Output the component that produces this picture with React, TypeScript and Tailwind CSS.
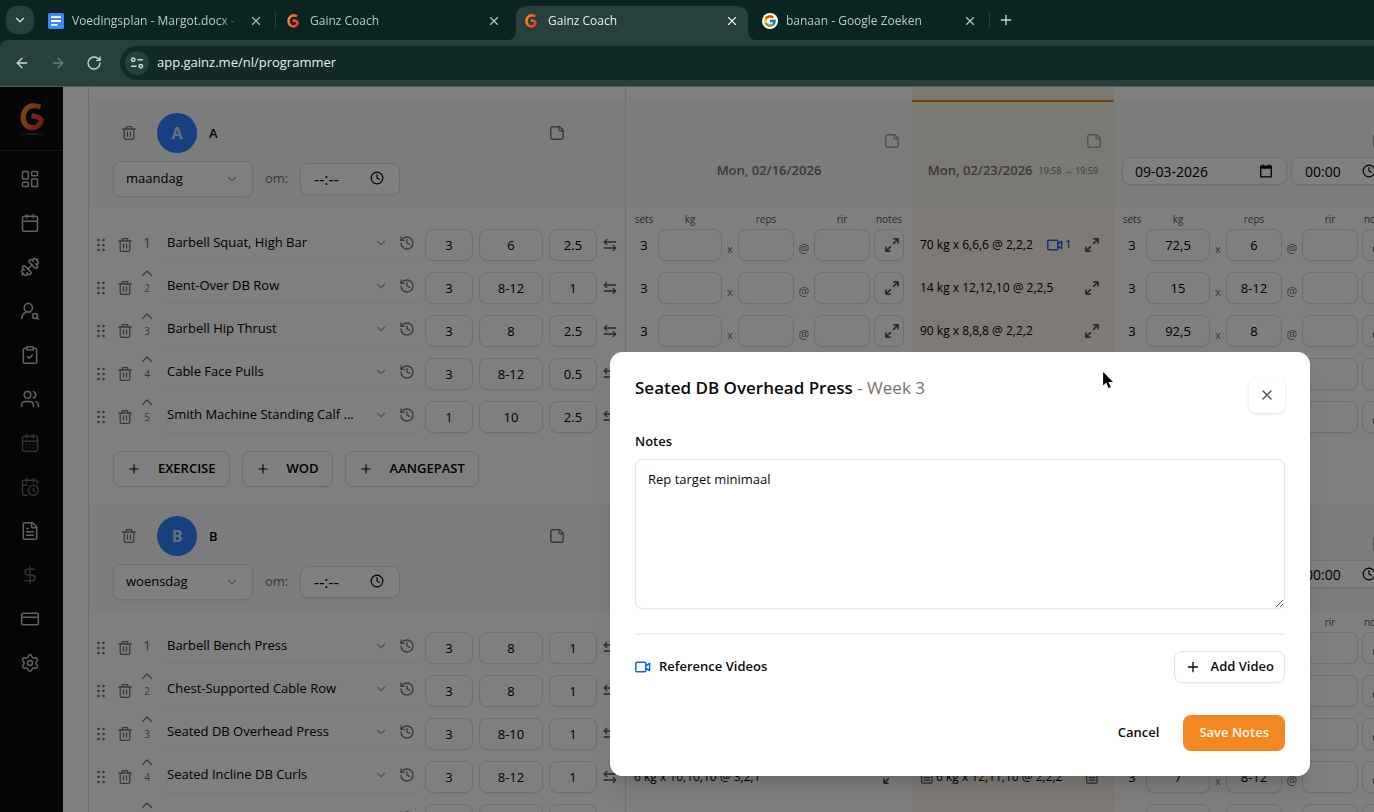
import React, { useState } from 'react';
import {
    ArrowLeft, ArrowRight, Calendar, CalendarClock, CalendarDays, ChevronDown, ClipboardCheck, Clock,
    CreditCard, DollarSign, Dumbbell, FileText, History, LayoutDashboard, Plus, RotateCw, Settings,
    UserRoundSearch, Users, X,
} from 'lucide-react';
import { FcGoogle } from 'react-icons/fc';

type Logged = { text: string; video?: number; note?: boolean };
type Planned = { sets: string; kg: string; reps: string; note?: boolean };
type Exercise = {
    name: string;
    sets: string;
    reps: string;
    step: string;
    week1: Logged | Planned | null;
    week2: Logged | null;
    week3: Planned;
};
type Day = {
    letter: string;
    weekday: string;
    date1: string;
    date2: string;
    logged: string;
    date3: string;
    exercises: Exercise[];
};

const open: Planned = { sets: '3', kg: '', reps: '' };
const blank: Planned = { sets: '', kg: '', reps: '' };

const days: Day[] = [
    {
        letter: 'A', weekday: 'maandag', date1: 'Mon, 02/16/2026', date2: 'Mon, 02/23/2026', logged: '19:58 → 19:59', date3: '09-03-2026',
        exercises: [
            { name: 'Barbell Squat, High Bar', sets: '3', reps: '6', step: '2.5', week1: open, week2: { text: '70 kg x 6,6,6 @ 2,2,2', video: 1 }, week3: { sets: '3', kg: '72,5', reps: '6' } },
            { name: 'Bent-Over DB Row', sets: '3', reps: '8-12', step: '1', week1: open, week2: { text: '14 kg x 12,12,10 @ 2,2,5' }, week3: { sets: '3', kg: '15', reps: '8-12', note: true } },
            { name: 'Barbell Hip Thrust', sets: '3', reps: '8', step: '2.5', week1: open, week2: { text: '90 kg x 8,8,8 @ 2,2,2' }, week3: { sets: '3', kg: '92,5', reps: '8' } },
            { name: 'Cable Face Pulls', sets: '3', reps: '8-12', step: '0.5', week1: null, week2: null, week3: { ...blank, note: true } },
            { name: 'Smith Machine Standing Calf ...', sets: '1', reps: '10', step: '2.5', week1: null, week2: null, week3: blank },
        ],
    },
    {
        letter: 'B', weekday: 'woensdag', date1: '', date2: '', logged: '', date3: '',
        exercises: [
            { name: 'Barbell Bench Press', sets: '3', reps: '8', step: '1', week1: null, week2: null, week3: blank },
            { name: 'Chest-Supported Cable Row', sets: '3', reps: '8', step: '1', week1: null, week2: null, week3: blank },
            { name: 'Seated DB Overhead Press', sets: '3', reps: '8-10', step: '1', week1: null, week2: null, week3: blank },
            { name: 'Seated Incline DB Curls', sets: '3', reps: '8-12', step: '1', week1: { text: '6 kg x 10,10,10 @ 3,2,1' }, week2: { text: '6 kg x 12,11,10 @ 2,2,2', note: true }, week3: { sets: '3', kg: '7', reps: '8-12' } },
            { name: '', sets: '', reps: '', step: '', week1: null, week2: null, week3: blank },
        ],
    },
];

const navItems = [
    { label: 'Dashboard', icon: LayoutDashboard },
    { label: 'Calendar', icon: Calendar },
    { label: 'Exercises', icon: Dumbbell },
    { label: 'Leads', icon: UserRoundSearch },
    { label: 'Check-ins', icon: ClipboardCheck },
    { label: 'Clients', icon: Users },
    { label: 'Schedule', icon: CalendarDays, dim: true },
    { label: 'Bookings', icon: CalendarClock, dim: true },
    { label: 'Documents', icon: FileText },
    { label: 'Finance', icon: DollarSign, dim: true },
    { label: 'Payments', icon: CreditCard },
    { label: 'Settings', icon: Settings },
];

const TrashIcon = () => (
    <svg viewBox="0 0 14 14" className="size-3.5" fill="none" stroke="currentColor" strokeWidth="1.3" strokeLinecap="round" strokeLinejoin="round">
        <path d="M.8 3h12.4M4.2 3V1.4c0-.5.3-.8.8-.8h4c.5 0 .8.3.8.8V3M2.2 3v9c0 .8.6 1.4 1.4 1.4h6.8c.8 0 1.4-.6 1.4-1.4V3M5.5 6v4.2M8.5 6v4.2" />
    </svg>
);

const NoteIcon = () => (
    <svg viewBox="0 0 14 14" className="size-3.5" fill="none" stroke="currentColor" strokeWidth="1.4" strokeLinejoin="round">
        <path d="M2.2.8h7.500l3.500 3.500v7.500c0 .8-.6 1.400-1.400 1.400H2.200c-.8 0-1.400-.6-1.400-1.400V2.200c0-.8.6-1.400 1.400-1.400zM9 .8v2.700c0 .7.5 1.200 1.200 1.200h3" />
    </svg>
);

const FileLinesIcon = () => (
    <svg viewBox="0 0 14 14" className="size-3.5" fill="none" stroke="currentColor" strokeWidth="1.2" strokeLinecap="round" strokeLinejoin="round">
        <path d="M3 .8h5.800l3.200 3v8c0 .8-.6 1.400-1.400 1.400H3c-.8 0-1.400-.6-1.400-1.400V2.200C1.600 1.400 2.200.8 3 .8zM4.200 5.200h5.400M4.200 7.700h5.400M4.200 10.200h5.400" />
    </svg>
);

const ExpandIcon = () => (
    <svg viewBox="0 0 14 14" className="size-3.5" fill="none" stroke="currentColor" strokeWidth="1.6" strokeLinecap="round" strokeLinejoin="round">
        <path d="M9 .9h4.100V5M13 1 8.600 5.400M5 13.100H.9V9M1 13l4.400-4.400" />
    </svg>
);

const SwapIcon = () => (
    <svg viewBox="0 0 14 14" className="size-3.5" fill="none" stroke="currentColor" strokeWidth="1.3" strokeLinecap="round" strokeLinejoin="round">
        <path d="M12.500 4H1.200M3.800 1.400 1.200 4l2.600 2.600M1.200 10h11.600M10.200 7.400l2.600 2.600-2.600 2.600" />
    </svg>
);

const UpIcon = () => (
    <svg viewBox="0 0 14 10" className="h-2.5 w-3.5" fill="none" stroke="currentColor" strokeWidth="1.300" strokeLinecap="round" strokeLinejoin="round">
        <path d="M2.500 7.500 7 3l4.500 4.500" />
    </svg>
);

const VideoIcon = () => (
    <svg viewBox="0 0 16 12" className="h-3 w-4" fill="none" stroke="currentColor" strokeWidth="1.5" strokeLinejoin="round">
        <path d="M1.800 1.200h8c.6 0 1 .4 1 1v7.600c0 .6-.4 1-1 1h-8c-.6 0-1-.4-1-1V2.200c0-.6.4-1 1-1zM11 4.800l3.600-2.400v7.200L11 7.200" />
    </svg>
);

const DateIcon = () => (
    <svg viewBox="0 0 14 14" className="pointer-events-none absolute right-3.5 top-[7px] size-3.5" fill="none" stroke="currentColor" strokeWidth="1.300">
        <path d="M1.700 2.200h10.600v10.600H1.700zM4 .5v2M10 .5v2" />
        <path d="M1.700 3.500h10.600" strokeWidth="2.400" />
    </svg>
);

const GripIcon = () => (
    <svg viewBox="0 0 8 14" className="h-3.5 w-2" fill="currentColor">
        {[2, 7, 12].map((y) => (
            <React.Fragment key={y}>
                <circle cx="1.500" cy={y} r="1.300" />
                <circle cx="6.500" cy={y} r="1.300" />
            </React.Fragment>
        ))}
    </svg>
);

const GainzLogo = ({ className }: { className: string }) => (
    <svg viewBox="0 0 24 28" className={className} fill="none">
        <defs>
            <linearGradient id="gainz" gradientUnits="userSpaceOnUse" x1="0" x2="24" y1="6" y2="14">
                <stop offset="0" stopColor="#fb951f" />
                <stop offset="1" stopColor="#dd3a2a" />
            </linearGradient>
        </defs>
        <path
            d="M20.500 4.200C15 2 9 2.300 5.800 6.500 2 11.500 2.400 18 6 22c3.200 3.500 9 3.300 12 .8 2.300-1.900 3.600-4.300 3-6.200-.9-2.300-4.500-3.200-9.500-3.900"
            stroke="url(#gainz)"
            strokeWidth="5.200"
        />
    </svg>
);

const fieldClass = 'rounded-lg border border-[#dedede] bg-white text-center text-[13px] text-black shadow-xs outline-none';

const DocsIcon = () => (
    <svg viewBox="0 0 16 16" className="size-4">
        <rect width="16" height="16" rx="1.500" fill="#4285f4" />
        <path d="M3 4.200h10M3 8h10M3 11.800h6.500" stroke="#fff" strokeWidth="1.800" />
    </svg>
);

const GoogleIcon = () => (
    <span className="flex size-4 items-center justify-center rounded-full bg-white">
        <FcGoogle className="size-3.5" />
    </span>
);

const BrowserTab = ({ title, icon, active, divider }: { title: string; icon: React.ReactNode; active?: boolean; divider?: boolean }) => (
    <>
        <div className={active
            ? 'relative flex h-[34px] w-[232px] shrink-0 items-center rounded-t-[10px] bg-[#28403b] pb-1 pl-2 pr-2 text-[#e3efeb]'
            : 'relative flex h-[34px] w-[232px] shrink-0 items-center pb-1 pl-2 pr-2 text-[#b3cdc6]'}
        >
            {active && (
                <>
                    <span className="absolute -left-2 bottom-0 size-2 bg-[#28403b]"><span className="block size-2 rounded-br-lg bg-[#0a2421]" /></span>
                    <span className="absolute -right-2 bottom-0 size-2 bg-[#28403b]"><span className="block size-2 rounded-bl-lg bg-[#0a2421]" /></span>
                </>
            )}
            <span className="flex w-4 shrink-0">{icon}</span>
            <span className="ml-2 flex-1 overflow-hidden whitespace-nowrap text-xs [mask-image:linear-gradient(to_right,black_88%,transparent)]">{title}</span>
            <button type="button" aria-label="Close tab" className="ml-2 flex size-4 items-center justify-center">
                <X className="size-3.5" />
            </button>
        </div>
        <span className="flex h-7 w-1.5 shrink-0 items-center justify-center">
            {divider && <span className="h-4 w-px bg-[#28403b]" />}
        </span>
    </>
);

const Browser = () => (
    <header className="shrink-0 bg-[#0a2421] text-[#c6dad5]">
        <div className="flex h-10 pt-1.5">
            <button type="button" aria-label="Search tabs" className="ml-1.5 mr-1.5 flex size-7 shrink-0 items-center justify-center rounded-[10px] bg-[#28403b]">
                <ChevronDown className="size-3.5" strokeWidth={2.5} />
            </button>
            <BrowserTab title="Voedingsplan - Margot.docx - G" icon={<DocsIcon />} divider />
            <BrowserTab title="Gainz Coach" icon={<GainzLogo className="ml-px h-3.5 w-3" />} />
            <BrowserTab title="Gainz Coach" icon={<GainzLogo className="ml-px h-3.5 w-3" />} active />
            <BrowserTab title="banaan - Google Zoeken" icon={<GoogleIcon />} divider />
            <button type="button" aria-label="New tab" className="ml-1.5 flex h-7 w-4 items-center justify-center">
                <Plus className="size-4" />
            </button>
        </div>
        <div className="flex h-[47px] items-center rounded-tl-lg border-b border-[#4d5f5b] bg-[#28403b] pl-3.5">
            <button type="button" aria-label="Back"><ArrowLeft className="size-4" /></button>
            <button type="button" aria-label="Forward" className="ml-5 text-[#6d837d]"><ArrowRight className="size-4" /></button>
            <button type="button" aria-label="Reload" className="ml-5"><RotateCw className="size-4" /></button>
            <div className="ml-[18px] flex h-[34px] flex-1 items-center rounded-l-full bg-[#112a27] pl-[5px]">
                <span className="flex size-6 shrink-0 items-center justify-center rounded-full bg-[#28403b]">
                    <svg viewBox="0 0 14 12" className="h-3 w-3.5" fill="none" stroke="currentColor" strokeWidth="1.500">
                        <circle cx="3.200" cy="2.800" r="1.700" />
                        <path d="M7.500 2.800H13M1 9.200h5.500" />
                        <circle cx="10.800" cy="9.200" r="1.700" />
                    </svg>
                </span>
                <input aria-label="Address" defaultValue="app.gainz.me/nl/programmer" className="ml-2 w-full bg-transparent text-[13px] text-[#e3efeb] outline-none" />
            </div>
        </div>
    </header>
);

const Sidebar = () => (
    <nav className="w-[63px] shrink-0 bg-[#0a0a0a]">
        <div className="flex h-16 flex-col items-center border-b border-[#2a2a2a] pt-4">
            <GainzLogo className="h-7 w-6" />
            <span className="mt-0.5 h-0.5 w-[22px] bg-linear-to-r from-[#1c1c1c] via-[#404040] to-[#1c1c1c]" />
        </div>
        <ul className="flex flex-col gap-6 py-[18px] pl-5">
            {navItems.map(({ label, icon: Icon, dim }) => (
                <li key={label} className="flex">
                    <a href="#" aria-label={label} className={dim ? 'text-[#666]' : 'text-[#c4c4c4]'}>
                        <Icon className="size-5" strokeWidth={1.8} />
                    </a>
                </li>
            ))}
        </ul>
    </nav>
);

const DayPlanHeader = ({ day }: { day: Day }) => (
    <div className="h-[105px] pl-6 pt-[11px]">
        <div className="flex items-center">
            <button type="button" aria-label="Delete day" className="flex w-8 justify-center text-stone-500"><TrashIcon /></button>
            <span className="ml-3 flex size-10 items-center justify-center rounded-full bg-[#2d80ff] text-base font-bold text-[#cfe0fb]">{day.letter}</span>
            <input aria-label="Day name" defaultValue={day.letter} className="ml-1 h-5 w-[324px] rounded-lg border-b border-[#f2f2f2] px-2 text-[13px] font-semibold text-black outline-none" />
            <button type="button" aria-label="Day notes" className="ml-[25px] text-stone-500"><NoteIcon /></button>
        </div>
        <div className="mt-2 flex items-center">
            <div className="relative">
                <select aria-label="Weekday" defaultValue={day.weekday} className="h-9 w-[140px] appearance-none rounded-lg border border-[#dedede] bg-white px-3 text-[13px] text-black shadow-xs">
                    <option>{day.weekday}</option>
                </select>
                <ChevronDown className="pointer-events-none absolute right-3.5 top-[11px] size-3.5 text-stone-400" />
            </div>
            <label htmlFor={'time-' + day.letter} className="ml-3 w-[35px] text-[13px] text-stone-500">om:</label>
            <div className="relative">
                <input id={'time-' + day.letter} defaultValue="--:--" className="h-8 w-[100px] rounded-lg border border-[#dedede] bg-white px-[13px] text-base text-black shadow-xs outline-none" />
                <Clock className="pointer-events-none absolute right-4 top-2 size-3.5 text-black" />
            </div>
        </div>
    </div>
);

const WeekHeader = ({ children }: { children: React.ReactNode }) => (
    <div className="h-[105px] pt-8">
        <div className="flex justify-end pr-[13px]">
            <button type="button" aria-label="Week notes" className="text-stone-400"><NoteIcon /></button>
        </div>
        <div className="mt-[9px] flex h-7 items-center justify-center whitespace-nowrap text-[13px] font-semibold text-stone-500">{children}</div>
    </div>
);

const PlannedLabels = () => (
    <div className="flex h-[18px] items-end pl-1 text-center text-[10px] font-medium leading-3 text-stone-600">
        <span className="w-7">sets</span>
        <span className="w-16">kg</span>
        <span className="ml-4 w-14">reps</span>
        <span className="ml-5 w-14">rir</span>
        <span className="ml-1 w-[30px]">notes</span>
    </div>
);

const PlannedCell = ({ entry }: { entry: Planned }) => (
    <div className="flex h-9 items-end pl-1 text-center">
        <span className="w-7 text-[13px] leading-8 text-black">{entry.sets}</span>
        <input aria-label="kg" defaultValue={entry.kg} className={fieldClass + ' h-8 w-16'} />
        <span className="w-4 text-[11px] leading-6 text-stone-500">x</span>
        <input aria-label="reps" defaultValue={entry.reps} className={fieldClass + ' h-8 w-14'} />
        <span className="w-5 text-xs leading-6 text-stone-500">@</span>
        <input aria-label="rir" className={fieldClass + ' h-8 w-14'} />
        <button type="button" aria-label="Notes" className={fieldClass + ' ml-1 flex h-8 w-[30px] items-center justify-center'}>
            <span className={entry.note ? 'pl-1.5 text-black' : 'pl-1.5 text-stone-600'}>
                {entry.note ? <FileLinesIcon /> : <ExpandIcon />}
            </span>
        </button>
    </div>
);

const LoggedCell = ({ entry }: { entry: Logged }) => (
    <div className="flex h-9 items-end pl-2 pr-[15px]">
        <div className="flex h-8 flex-1 items-center whitespace-nowrap text-xs text-black">
            {entry.note && <span className="mr-0.5 text-stone-600"><FileLinesIcon /></span>}
            <span className="flex-1">{entry.text}</span>
            {entry.video && (
                <span className="mr-3.5 flex items-center gap-0.5 text-[10px] font-semibold text-[#2563eb]"><VideoIcon />{entry.video}</span>
            )}
            <button type="button" aria-label="Notes" className="text-stone-600">{entry.note ? <FileLinesIcon /> : <ExpandIcon />}</button>
        </div>
    </div>
);

const PlanCell = ({ exercise, index }: { exercise: Exercise; index: number }) => (
    <div className="flex h-9 items-end pl-2 text-stone-500">
        <button type="button" aria-label="Move" className="flex h-8 w-2 items-center"><GripIcon /></button>
        <button type="button" aria-label="Delete exercise" className="ml-3 flex h-8 w-4 items-center justify-center"><TrashIcon /></button>
        {index === 0 ? (
            <span className="ml-2 flex h-9 w-3 items-center justify-center text-sm">1</span>
        ) : (
            <span className="ml-2 flex h-9 w-3 flex-col items-center text-[10px] leading-5">
                <button type="button" aria-label="Move up"><UpIcon /></button>
                {index + 1}
            </span>
        )}
        <div className="ml-1 flex h-9 w-[264px] items-center rounded-lg border-b border-[#f3f3f3] pl-2.5 pr-1.5">
            <button type="button" aria-haspopup="listbox" className="flex flex-1 items-center justify-between whitespace-nowrap text-left text-[13px] text-black">
                {exercise.name}
                <ChevronDown className="ml-auto size-3.5 text-stone-400" />
            </button>
            <button type="button" aria-label="History" className="ml-[11px] text-stone-500"><History className="size-4" /></button>
        </div>
        <input aria-label="sets" defaultValue={exercise.sets} className={fieldClass + ' ml-1 h-8 w-12'} />
        <input aria-label="reps" defaultValue={exercise.reps} className={fieldClass + ' ml-1.5 h-8 w-16'} />
        <input aria-label="step" defaultValue={exercise.step} className={fieldClass + ' ml-1.5 h-8 w-12'} />
        <button type="button" aria-label="Swap" className="ml-1.5 flex h-8 items-center text-stone-600"><SwapIcon /></button>
    </div>
);

const DaySection = ({ day }: { day: Day }) => (
    <tbody className="align-top">
        <tr className="bg-[#f8f8f8]">
            <td className="border-x border-[#dcdcdc]"><DayPlanHeader day={day} /></td>
            <td><WeekHeader>{day.date1}</WeekHeader></td>
            <td className="bg-[#f6f3e9]">
                <WeekHeader>{day.date2}<span className="ml-1.5 text-[9px] font-normal">{day.logged}</span></WeekHeader>
            </td>
            <td>
                <WeekHeader>
                    <div className="flex w-full gap-1 pl-2 font-normal text-black">
                        <div className="relative">
                            <input aria-label="Date" defaultValue={day.date3} className="h-7 w-[165px] rounded-lg border border-[#dedede] bg-white px-3 text-sm shadow-xs outline-none" />
                            <DateIcon />
                        </div>
                        <div className="relative">
                            <input aria-label="Time" defaultValue="00:00" className="h-7 w-[101px] rounded-lg border border-[#dedede] bg-white px-[13px] text-sm shadow-xs outline-none" />
                            <Clock className="pointer-events-none absolute right-4 top-[7px] size-3.5" />
                        </div>
                    </div>
                </WeekHeader>
            </td>
        </tr>
        <tr className="bg-white">
            <td className="h-[18px] border-x border-[#dcdcdc]" />
            <td><PlannedLabels /></td>
            <td className="bg-[#fff4ec]" />
            <td><PlannedLabels /></td>
        </tr>
        {day.exercises.map((exercise, index) => (
            <tr key={index} className="bg-white">
                <td className="h-[43px] border-x border-[#dcdcdc]"><PlanCell exercise={exercise} index={index} /></td>
                <td>
                    {exercise.week1 && ('text' in exercise.week1 ? <LoggedCell entry={exercise.week1} /> : <PlannedCell entry={exercise.week1} />)}
                </td>
                <td className="bg-[#fff4ec]">{exercise.week2 && <LoggedCell entry={exercise.week2} />}</td>
                <td><PlannedCell entry={exercise.week3} /></td>
            </tr>
        ))}
        <tr className="bg-white">
            <td className="h-[65px] border-x border-[#dcdcdc]">
                <div className="flex gap-3 pl-6 pt-[11px]">
                    {['EXERCISE', 'WOD', 'AANGEPAST'].map((label) => (
                        <button key={label} type="button" className="flex h-9 items-center gap-[17px] rounded-lg border border-[#dedede] bg-white px-[13px] text-[13px] font-semibold text-black shadow-xs">
                            <Plus className="size-3.5" />
                            {label}
                        </button>
                    ))}
                </div>
            </td>
            <td />
            <td className="bg-[#fff4ec]" />
            <td />
        </tr>
    </tbody>
);

const NotesDialog = () => {
    const [notes, setNotes] = useState('Rep target minimaal');

    return (
        <div role="dialog" aria-labelledby="dialog-title" className="absolute left-[610px] top-[265px] w-[700px] rounded-xl border border-white bg-white p-6 text-[#0c0a09] shadow-xl">
            <div className="flex items-start justify-between">
                <h2 id="dialog-title" className="text-[17px] font-semibold leading-[22px]">
                    Seated DB Overhead Press <span className="font-normal text-stone-500">- Week 3</span>
                </h2>
                <button type="button" aria-label="Close" className="flex size-9 items-center justify-center rounded-lg text-stone-600 shadow-[0_1px_3px_rgba(0,0,0,0.14)]">
                    <X className="size-4" />
                </button>
            </div>
            <label htmlFor="notes" className="mb-2 mt-[18px] block text-[13px] font-semibold leading-5">Notes</label>
            <textarea
                id="notes"
                value={notes}
                onChange={(e) => setNotes(e.target.value)}
                className="block h-[150px] w-full rounded-lg border border-[#e4e4e4] px-3 py-[9px] text-[13px] leading-5 shadow-xs outline-none"
            />
            <div className="mt-6 flex items-center justify-between border-t-2 border-[#f0f0f0] pt-4">
                <h3 className="flex items-center gap-2 text-[13px] font-semibold"><span className="text-[#155dfc]"><VideoIcon /></span>Reference Videos</h3>
                <button type="button" className="flex h-8 items-center gap-2.5 rounded-lg border border-[#e4e4e4] px-2.5 text-[13px] font-semibold shadow-xs">
                    <Plus className="size-4" />
                    Add Video
                </button>
            </div>
            <div className="mt-8 flex justify-end gap-2">
                <button type="button" className="h-9 px-4 text-[13px] font-semibold">Cancel</button>
                <button type="button" className="h-9 rounded-lg bg-[#f38721] px-4 text-[13px] font-semibold text-[#fff5e9]">Save Notes</button>
            </div>
        </div>
    );
};

export default function App() {
    return (
        <div className="flex h-screen flex-col overflow-hidden font-['Open_Sans','Noto_Sans',sans-serif]">
            <Browser />
            <div className="relative flex min-h-0 flex-1">
                <Sidebar />
                <main className="flex-1 overflow-hidden bg-white pl-[25px]">
                    <table className="w-[1312px] table-fixed border-separate border-spacing-0">
                        <colgroup>
                            <col className="w-[538px]" />
                            <col className="w-[286px]" />
                            <col className="w-[202px]" />
                            <col className="w-[286px]" />
                        </colgroup>
                        <thead>
                            <tr>
                                <td className="h-[15px] border-x border-[#dcdcdc]" />
                                <td />
                                <td className="border-b-2 border-[#f38721] bg-[#fbeee4]" />
                                <td />
                            </tr>
                        </thead>
                        {days.map((day) => <DaySection key={day.letter} day={day} />)}
                    </table>
                </main>
                <div className="absolute inset-0 bg-black/50" />
                <NotesDialog />
                <svg viewBox="0 0 12 19" className="pointer-events-none absolute left-[1103px] top-[285px] h-[17px] w-[11px]">
                    <path d="M0 0v15l3.500-3.200L6 18l2.500-1-2.500-5.800H11z" fill="#000" />
                </svg>
            </div>
        </div>
    );
}
